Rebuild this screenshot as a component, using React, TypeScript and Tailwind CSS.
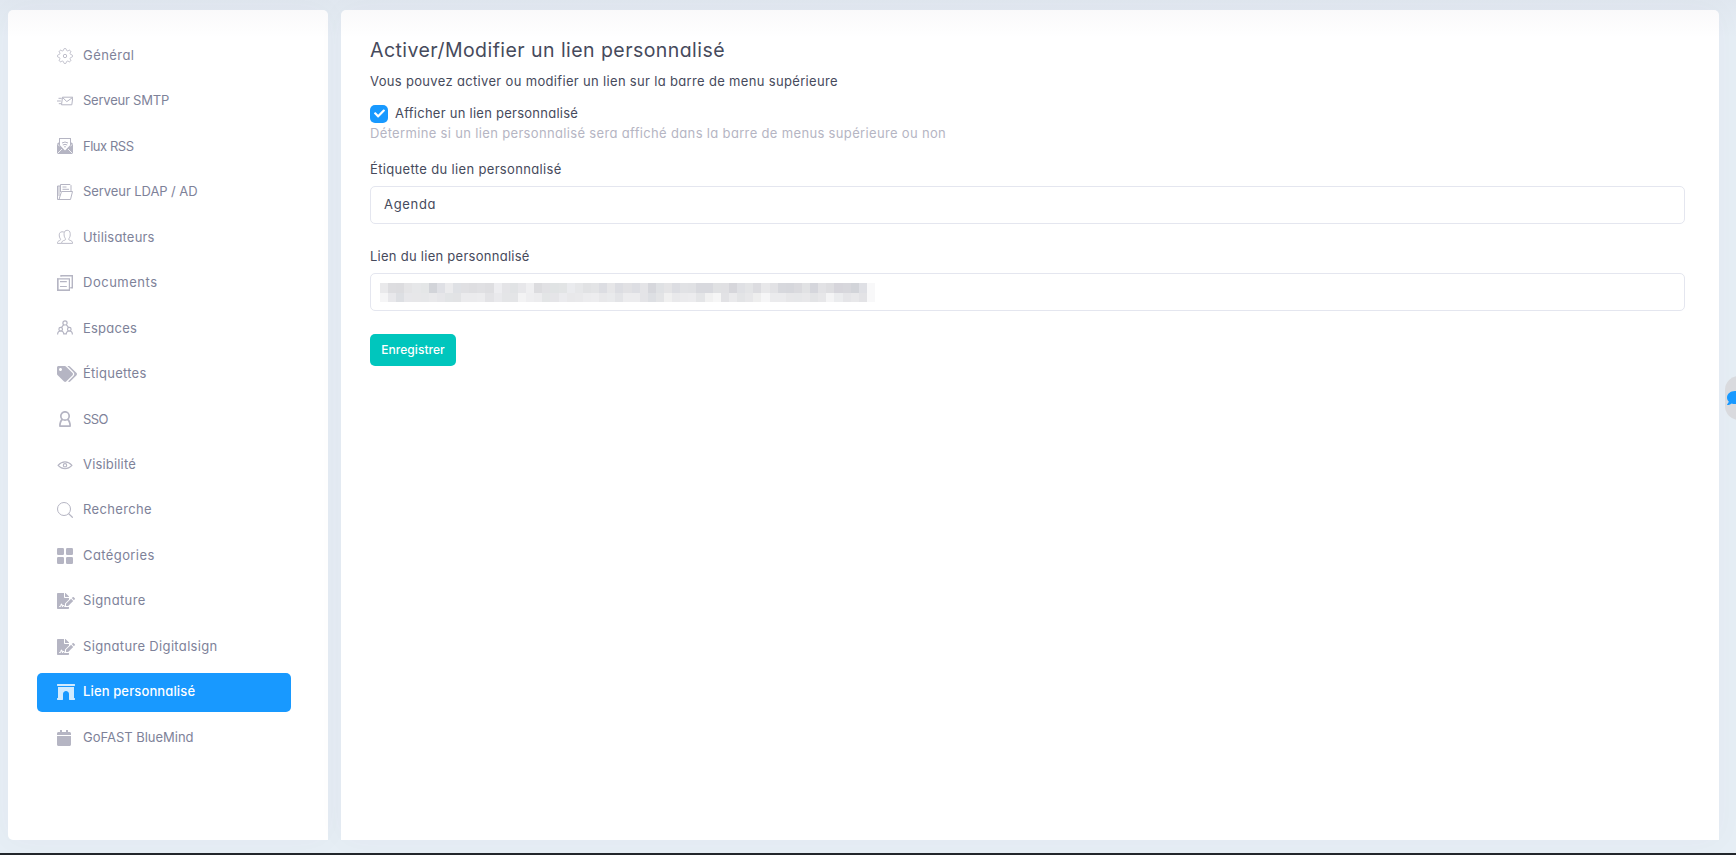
import type { ReactNode } from "react";
import { FaArchway, FaCalendar, FaCheck, FaComment, FaFileSignature, FaTags } from "react-icons/fa";

function Outline({ children, w = 1 }: { children: ReactNode; w?: number }) {
  return (
    <svg viewBox="0 0 16 16" className="size-4" fill="none" stroke="currentColor" strokeWidth={w} strokeLinejoin="round">
      {children}
    </svg>
  );
}

// Eight-lobed gear rim
const gearPoints = Array.from({ length: 96 }, (_, i) => {
  const a = (i / 96) * Math.PI * 2;
  const r = 6.6 + 0.95 * Math.tanh(2 * Math.cos(8 * a));
  return `${(8 + r * Math.cos(a)).toFixed(2)},${(8 + r * Math.sin(a)).toFixed(2)}`;
}).join(" ");

const GearIcon = () => (
  <Outline w={0.9}>
    <polygon points={gearPoints} />
    <circle cx="8" cy="8" r="1.7" />
  </Outline>
);

const MailIcon = () => (
  <Outline w={1}>
    <path d="M5.5 4.2h10.300l-1 7.600H4.500zM5.700 4.600l4.100 4 5.700-4M1.500 5.300h3.200M0 8h3.800M1.800 10.700h2.200" />
  </Outline>
);

const RssIcon = () => (
  <svg viewBox="0 0 16 16" className="size-4" fill="currentColor">
    <path d="M2 0h12v4.200l2 1.600V16H0V5.800l2-1.600zM3 1v6.200l5 5.300 5-5.300V1z" fillRule="evenodd" />
    <path d="M.3 15.700 5 11M15.700 15.700 11 11M.5 6.200 2.500 8M15.500 6.200 13.500 8" stroke="white" strokeWidth=".8" />
    <path d="M5 5q3-2 6 0M5.800 7q2.200-1.300 4.400 0" fill="none" stroke="currentColor" strokeWidth="1" />
    <circle cx="8" cy="8.800" r=".8" />
  </svg>
);

const FolderIcon = () => (
  <Outline w={1}>
    <path d="M2 15.500h11.500l2-8H4.500zM.5 15.500V2h2.500M3.500 8V.5h9.500l1 1v6M.5 15.500h2M5.500 3h4M5.500 5.300h6.500" />
    <path d="M2 2v10" />
  </Outline>
);

const UsersIcon = () => (
  <Outline w={0.9}>
    <path d="M4.600 14.400h11c0-2-.9-2.600-3.200-3.300-.9-.3-.8-1.200-.3-1.800 1-1.400 1.200-2.700 1.100-4.800C13 2.300 12 1.300 10.200 1.300S7.200 2.300 7.100 4.500c-.1 2.100.2 3.400 1.100 4.800.5.600.6 1.500-.3 1.800-2.400.7-3.200 1.300-3.300 3.300z" />
    <path d="M6.900 3C4 2.200 2.300 3.400 2.200 5.900c0 1.800.4 2.800 1.100 3.900.5.700.3 1.400-.5 1.700-1.700.6-2.400 1.200-2.400 2.900h4.200" />
  </Outline>
);

const DocumentsIcon = () => (
  <svg viewBox="0 0 16 16" className="size-4" fill="none" stroke="currentColor">
    <path d="M.6 3.800h11.800v11.500H.6z" strokeWidth="1.200" />
    <path d="M0 15.200h13M.8 3.500v12" strokeWidth="1.500" />
    <path d="M4 1.800V.7h11.300v12.100h-2" strokeWidth="1.400" />
    <path d="M3 6.700h6.800M3 11.500h6.800" strokeWidth="1.200" />
  </svg>
);

const SpacesIcon = () => (
  <Outline w={1.2}>
    <circle cx="8" cy="2.900" r="2.100" />
    <circle cx="3.700" cy="9.200" r="1.800" />
    <circle cx="12.300" cy="9.200" r="1.800" />
    <path d="M.6 14.500c0-2.200 1.200-3.500 3.100-3.500s3.100 1.300 3.100 3.500M9.200 14.500c0-2.200 1.200-3.500 3.100-3.500s3.100 1.300 3.100 3.500M6.800 4.600 4.500 7.300M9.200 4.600l2.300 2.700M6.500 13.800h3" />
  </Outline>
);

const PersonIcon = () => (
  <Outline w={1.7}>
    <circle cx="8" cy="5" r="4.200" />
    <path d="M5.500 8.300C3.800 9.600 2.900 12 2.900 15.100h10.200c0-3.100-.9-5.500-2.600-6.800" />
  </Outline>
);

const EyeIcon = () => (
  <Outline w={1.1}>
    <path d="M1 8.300Q4.300 4.900 8 4.900t7 3.400Q11.700 11.700 8 11.700T1 8.300z" />
    <circle cx="8" cy="8.300" r="1.700" />
  </Outline>
);

const SearchIcon = () => (
  <Outline w={1}>
    <circle cx="7" cy="7" r="6.500" />
    <path d="m11.500 11.500 4.300 4.200" strokeWidth="1.200" />
  </Outline>
);

const GridIcon = () => (
  <svg viewBox="0 0 16 16" className="size-4" fill="currentColor">
    <rect width="7" height="7" rx="1.300" />
    <rect x="9" width="7" height="7" rx="1.300" />
    <rect y="9" width="7" height="7" rx="1.300" />
    <rect x="9" y="9" width="7" height="7" rx="1.300" />
  </svg>
);

const items: { label: string; spacing: string; icon: ReactNode; active?: boolean }[] = [
  { label: "Général", spacing: "tracking-[0.446px]", icon: <GearIcon /> },
  { label: "Serveur SMTP", spacing: "tracking-[-0.222px]", icon: <MailIcon /> },
  { label: "Flux RSS", spacing: "tracking-[-0.476px]", icon: <RssIcon /> },
  { label: "Serveur LDAP / AD", spacing: "tracking-[-0.076px]", icon: <FolderIcon /> },
  { label: "Utilisateurs", spacing: "tracking-[0.193px]", icon: <UsersIcon /> },
  { label: "Documents", spacing: "tracking-[0.508px]", icon: <DocumentsIcon /> },
  { label: "Espaces", spacing: "tracking-[0.224px]", icon: <SpacesIcon /> },
  { label: "Étiquettes", spacing: "tracking-[0.256px]", icon: <FaTags className="h-4 w-5 shrink-0" /> },
  { label: "SSO", spacing: "tracking-[-0.541px]", icon: <PersonIcon /> },
  { label: "Visibilité", spacing: "tracking-[0.176px]", icon: <EyeIcon /> },
  { label: "Recherche", spacing: "tracking-[0.353px]", icon: <SearchIcon /> },
  { label: "Catégories", spacing: "tracking-[0.404px]", icon: <GridIcon /> },
  { label: "Signature", spacing: "tracking-[0.373px]", icon: <FaFileSignature className="h-4 w-[18px] shrink-0" /> },
  { label: "Signature Digitalsign", spacing: "tracking-[0.340px]", icon: <FaFileSignature className="h-4 w-[18px] shrink-0" /> },
  { label: "Lien personnalisé", spacing: "tracking-[0.130px]", icon: <FaArchway className="h-4 w-[18px] shrink-0" />, active: true },
  { label: "GoFAST BlueMind", spacing: "tracking-[-0.020px]", icon: <FaCalendar className="h-4 w-3.5 shrink-0" /> },
];

const maskTop =
  "e9e9eb dddde0 dcdcdf e4e4e6 e6e7e9 e4e6e7 d2d4d9 dfe0e5 ebebed dfe1e5 e0e0e3 dedee1 e0e0e3 dedee1 ededf0 e4e4e7 e1e3e5 e7e7ea efeff1 dcdcdf e1e1e4 e0e3e4 e2e4e5 eaebee e6e7e9 e1e2e4 e3e4e6 dcdde2 e6e6e8 dcdde2 e1e1e4 dddee3 e4e4e7 d6d7dc dfe1e4 e4e4e6 dcdde2 e1e2e5 e0e1e4 d8d9de d8d9de e0e1e3 e0e0e3 d6d6db dfe0e4 e3e4e6 dcdce0 e8e8ea e2e2e5 d7d8dd d6d7dc dadade e1e2e4 d5d6dc e2e2e5 dedee1 d6d5db d7d7dc d2d4d9 dfe0e5 f8f8f9".split(" ");
const maskBottom =
  "f5f5f6 e8e8eb dddfe3 e7e7ea e7e7e9 e6e7e9 e9e9eb e6e6e9 e2e4e6 e2e3e5 ebebed ebebed ececee e3e3e6 e9e9ec e4e5e7 e4e5e7 f3f3f4 eeeef0 ececee e3e5e6 e5e5e8 ebebee e8e8ea e9e9eb ececee ededef e8e8ea e9eaec e3e4e7 ececee ececee e4e4e7 dddfe3 e3e4e6 f0f0f0 e9e9eb ebebed ececee e4e5e7 f1f1f1 f6f6f6 e2e2e5 eaeaec e3e4e6 e7e7e9 eeeeee f6f6f7 ebebed ebebed e7e7e9 e6e7e9 e8e8ea e3e4e6 e7e7e9 f4f4f5 ebecee e5e5e8 e8e8ea e3e3e6 f8f8f9".split(" ");

function MaskRow({ colors, height }: { colors: string[]; height: string }) {
  return (
    <div className={`flex w-[495px] ${height}`}>
      {colors.map((c, i) => {
        const start = Math.round((i * 495) / 61);
        const end = Math.round(((i + 1) * 495) / 61);
        return <span key={i} className="shrink-0" style={{ width: end - start, backgroundColor: `#${c}` }} />;
      })}
    </div>
  );
}

export default function App() {
  return (
    <div className="relative flex h-[855px] w-full flex-col overflow-hidden bg-[#e6eef5] font-[Inter,sans-serif] text-[13px] leading-[19.5px] text-[#464a5c] [font-feature-settings:'cv11']">
      <div className="flex h-[853px] shrink-0 gap-[13px] pt-[10px] pb-[13px] pl-2">
        <aside className="w-80 shrink-0 rounded-[5px] rounded-br-none bg-white px-[29px] pt-[26px] shadow-[0_0_30px_rgba(82,63,105,0.03)]">
          <nav className="flex w-[254px] flex-col gap-[6.48px]">
            {items.map((item) => (
              <a
                key={item.label}
                className={
                  item.active
                    ? "flex h-[39px] items-center rounded-[5px] bg-[#1899ff] pl-5 font-medium text-white"
                    : "flex h-[39px] items-center pl-5 text-[#7e8299]"
                }
              >
                <span className={item.active ? "flex w-[26px] text-white/80" : "flex w-[26px] text-[#b5b5c3]"}>
                  {item.icon}
                </span>
                <span className={`whitespace-nowrap ${item.spacing}`}>{item.label}</span>
              </a>
            ))}
          </nav>
        </aside>

        <main className="flex w-[1378px] shrink-0 flex-col items-start rounded-t-[5px] bg-white px-[29px] pt-[26px] shadow-[0_0_30px_rgba(82,63,105,0.03)]">
          <h1 className="text-[19.5px] leading-[28px] tracking-[0.445px]">Activer/Modifier un lien personnalisé</h1>
          <p className="mt-2 tracking-[0.328px]">Vous pouvez activer ou modifier un lien sur la barre de menu supérieure</p>
          <label className="mt-[13px] flex h-[18px] items-center gap-[7px]">
            <span className="flex size-[18px] items-center justify-center rounded-[5px] bg-[#1899ff] text-white">
              <FaCheck className="size-[11px]" />
            </span>
            <span className="tracking-[0.252px]">Afficher un lien personnalisé</span>
          </label>
          <p className="mt-px tracking-[0.336px] text-[#b5b5c3]">
            Détermine si un lien personnalisé sera affiché dans la barre de menus supérieure ou non
          </p>

          <div className="mt-[17px] w-[1315px]">
            <div className="tracking-[0.342px]">Étiquette du lien personnalisé</div>
            <div className="mt-[6px] flex h-[38px] items-center rounded-[5px] border border-[#e4e6ef] px-[13px]">
              <span className="tracking-[0.680px]">Agenda</span>
            </div>
          </div>

          <div className="mt-[23px] w-[1315px]">
            <div className="tracking-[0.264px]">Lien du lien personnalisé</div>
            <div className="mt-[7px] flex h-[38px] flex-col items-start rounded-[5px] border border-[#e4e6ef] pt-[9px] pl-[9px]">
              <MaskRow colors={maskTop} height="h-[10px]" />
              <MaskRow colors={maskBottom} height="h-[9px]" />
            </div>
          </div>

          <button className="mt-[23px] h-8 w-[86px] rounded-[5px] bg-[#00c6bd] text-[12px] font-medium tracking-[0.050px] text-white">
            Enregistrer
          </button>
        </main>
      </div>
      <div className="h-[2px] w-full shrink-0 bg-[#22262b]" />

      <div className="pointer-events-none absolute inset-x-0 top-0 h-[38px] bg-linear-to-b from-[#523f69]/4 to-[#523f69]/0" />
      <div className="absolute top-[376px] left-[1725px] flex h-11 w-10 items-center rounded-[14px] bg-[#d9dade] pl-0.5 text-[#1899ff]">
        <FaComment className="size-4" />
      </div>
    </div>
  );
}
